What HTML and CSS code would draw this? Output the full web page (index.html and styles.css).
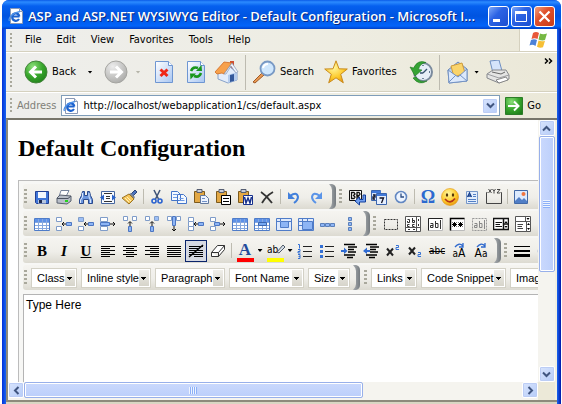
FILE: index.html
```html
<!DOCTYPE html>
<html lang="en">
<head>
<meta charset="utf-8">
<title>ASP and ASP.NET WYSIWYG Editor</title>
<link rel="stylesheet" href="styles.css">
</head>
<body>
<svg class="defs" aria-hidden="true">
  <defs>
    <linearGradient id="paper" x1="0" y1="0" x2="1" y2="1"><stop offset="0" stop-color="#fff"/><stop offset="1" stop-color="#a8c6f2"/></linearGradient>
    <radialGradient id="green" cx=".35" cy=".25" r=".9"><stop offset="0" stop-color="#8ade78"/><stop offset=".5" stop-color="#38a62c"/><stop offset="1" stop-color="#1c7a18"/></radialGradient>
    <radialGradient id="gray" cx=".35" cy=".25" r=".9"><stop offset="0" stop-color="#ececec"/><stop offset="1" stop-color="#a3a3a0"/></radialGradient>
    <radialGradient id="gold" cx=".4" cy=".3" r=".8"><stop offset="0" stop-color="#fff7a0"/><stop offset=".6" stop-color="#fdc826"/><stop offset="1" stop-color="#e08a10"/></radialGradient>
    <linearGradient id="clamp" x1="0" x2="1"><stop offset="0" stop-color="#a9adb0"/><stop offset="1" stop-color="#757b80"/></linearGradient>
    <symbol id="ie" viewBox="0 0 16 16"><path d="M2.500.5h9l3 3v12h-12z" fill="#fff" stroke="#8a99b5"/><path d="M11.500.5v3h3" fill="#dce6f5" stroke="#8a99b5"/><path d="M11.500 8.500H4.500M11 11c-2 3-7 2-6.800-2.200C4.300 4.500 10.500 4 11.300 8.500" fill="none" stroke="#1d63cf" stroke-width="2.200"/><path d="M1.500 13C-.5 10 5 4.500 12 3.500" fill="none" stroke="#4c91e8" stroke-width="1.300"/></symbol>
    <symbol id="clamp-shape" viewBox="0 0 7 25"><path d="M0 0h3q4 1 4 5v15q0 4-4 5H0q3-3 3-6V6q0-3-3-6z" fill="url(#clamp)"/></symbol>
    <symbol id="clip" viewBox="0 0 16 16"><path d="M1.500 2.500h10v11h-10z" fill="#e3a844" stroke="#7c5a1c"/><path d="M4 .5h5v3H4z" fill="#c9cdd8" stroke="#555e72"/></symbol>
    <symbol id="cells-left" viewBox="0 0 16 16"><path d="M.5 1.500h5v4h-5zM.5 10.500h5v4h-5z" fill="#fff" stroke="#7f9cc9"/><path d="M10.500 6.500h5v3h-5z" fill="#8db5f5" stroke="#4c76c2"/><path d="M6 8h4M8 6L6 8l2 2" stroke="#111" fill="none"/></symbol>
    <symbol id="cells-top" viewBox="0 0 16 16"><path d="M1.500.5h4v4h-4zM10.500.5h4v4h-4z" fill="#fff" stroke="#7f9cc9"/><path d="M6.500 10.500h3v5h-3z" fill="#8db5f5" stroke="#4c76c2"/><path d="M8 6v4M6 7.500L8 5.500l2 2" stroke="#111" fill="none"/></symbol>
    <symbol id="grid" viewBox="0 0 16 16"><path d="M.5 2.500h15v12H.5z" fill="#fff" stroke="#4f7cc8"/><path d="M1 3h14v3H1z" fill="#5d91e8"/><path d="M1 6.500h14M1 9.500h14M1 12.500h14M4.500 3v11M8.500 3v11M12.500 3v11" stroke="#86a8de"/></symbol>
  </defs>
</svg>
<div class="window">
  <header class="title">
    <svg class="i"><use href="#ie"/></svg>
    <span class="title-text">ASP and ASP.NET WYSIWYG Editor - Default Configuration - Microsoft I...</span>
    <div class="caption">
      <button aria-label="Minimize"><svg viewBox="0 0 19 19"><path d="M4 12h7v3H4z" fill="#fff"/></svg></button>
      <button aria-label="Maximize"><svg viewBox="0 0 19 19"><path d="M3.500 4.500h11v10h-11zM3.500 5.500h11" fill="none" stroke="#fff"/><path d="M3 4h12v3H3z" fill="#fff"/></svg></button>
      <button class="close" aria-label="Close"><svg viewBox="0 0 19 19"><path d="M4.500 4.500l10 10m0-10l-10 10" stroke="#fff" stroke-width="2.200"/></svg></button>
    </div>
  </header>
  <nav class="bar menu">
    <i class="dots"></i>
    <a href="#">File</a><a href="#">Edit</a><a href="#">View</a><a href="#">Favorites</a><a href="#">Tools</a><a href="#">Help</a>
    <span class="flag"><svg viewBox="0 0 20 18"><path d="M4 2q3-2 6 0L8.500 8q-3-1.500-6 0z" fill="#e8583a"/><path d="M11 2.500q3 1.500 7 0L16 9q-3 1-6.500-.5z" fill="#76b843"/><path d="M2 9q3-1.500 6 0l-1.500 6q-3-2-6-.5z" fill="#4d82d8"/><path d="M9.500 9.500q3 1.500 6.500.3l-2 6.500q-3 1.200-6-.6z" fill="#f6bf35"/></svg></span>
  </nav>
  <div class="bar tools">
    <i class="dots"></i>
    <button class="tool back"><svg class="big" viewBox="0 0 24 24"><circle cx="12" cy="12" r="11" fill="url(#green)" stroke="#43843b"/><path d="M18 12H7M12 6.500L6.500 12l5.500 5.500" fill="none" stroke="#fff" stroke-width="3"/></svg>Back</button>
    <button class="tool drop" aria-label="Back history"><i class="tri"></i></button>
    <button class="tool" aria-label="Forward"><svg class="big" viewBox="0 0 24 24"><circle cx="12" cy="12" r="11" fill="url(#gray)" stroke="#a4a4a0"/><path d="M6 12h11M12 6.500l5.500 5.500-5.500 5.500" fill="none" stroke="#fff" stroke-width="3"/></svg></button>
    <button class="tool drop next-drop" aria-label="Forward history"><i class="tri off"></i></button>
    <button class="tool page-tool" aria-label="Stop"><svg class="big" viewBox="0 0 24 24"><path d="M3.500 1.500h13l4 4v17h-17z" fill="url(#paper)" stroke="#6e96d2"/><path d="M16.500 1.500v4h4" fill="#fff" stroke="#6e96d2"/><path d="M8.500 9.500l7 6.500m0-6.500l-7 6.500" stroke="#f02818" stroke-width="3"/></svg></button>
    <button class="tool page-tool" aria-label="Refresh"><svg class="big" viewBox="0 0 24 24"><path d="M3.500 1.500h13l4 4v17h-17z" fill="url(#paper)" stroke="#6e96d2"/><path d="M16.500 1.500v4h4" fill="#fff" stroke="#6e96d2"/><path d="M7 11q2-5 7-3M17 13q-2 5-7 3" fill="none" stroke="#18961c" stroke-width="2.600"/><path d="M12 11l6 0-.5-6zM12 13.500H6l.5 6z" fill="#18961c"/></svg></button>
    <button class="tool home" aria-label="Home"><svg class="big" viewBox="0 0 24 24"><path d="M15 1h4v8h-4z" fill="#d05032"/><path d="M3 12l11-6 8 7v7l-9 3-10-4z" fill="#e3edfb" stroke="#88a1c9"/><path d="M13 15l9-3v8l-9 3z" fill="#b3cbed"/><path d="M15 15l4-1v7l-4 1z" fill="#33589a"/><path d="M0 12L9 2l8 1-8 11-2-1-5 1z" fill="#f7a14b" stroke="#cf6b23" stroke-width=".8"/><path d="M17 3l6 9-2 1-5-7-5 8-2 0z" fill="#f1f5fc" stroke="#8195b5" stroke-width=".7"/></svg></button>
    <i class="rule"></i>
    <button class="tool"><svg class="big" viewBox="0 0 24 24"><path d="M1 22l9-9 2 2-9 8z" fill="#e99a52" stroke="#a05a28"/><circle cx="15.500" cy="8.500" r="7" fill="#cfe7fd" stroke="#7899c4" stroke-width="1.800"/><path d="M11 8q1-4 5-4" fill="none" stroke="#fff" stroke-width="2"/></svg>Search</button>
    <button class="tool star"><svg class="big" viewBox="0 0 24 24"><path d="M12 .8l3 8 8.300.2-6.600 5.300 2.600 8.500-7.300-5-7.300 5 2.600-8.500L.7 9 9 8.800z" fill="url(#gold)" stroke="#c98b1c"/></svg>Favorites</button>
    <button class="tool history" aria-label="History"><svg class="big" viewBox="0 0 24 24"><circle cx="14" cy="12" r="9" fill="#e6eef8" stroke="#7a8a9d" stroke-width="2"/><path d="M14 13l4-4M14 13h-3M14 5v1M14 18v1M21 12h-1" stroke="#34506e" stroke-width="1.300"/><path d="M17 2.500Q9-1 4.500 8L1 7l5 9 7-6-3.500-.5Q11 3 17 2.500zM7 17q4 6 11 4-8 5-14-3z" fill="#35a334" stroke="#1d7720" stroke-width=".6"/></svg></button>
    <i class="rule"></i>
    <button class="tool" aria-label="Mail"><svg class="big" viewBox="0 0 24 24"><path d="M2 10L12 2l9 7v12l-18 2z" fill="#b9d0f1" stroke="#6785b5"/><path d="M5 6l11-3 3 10-11 4z" fill="#fad46b" stroke="#cf9c3a"/><path d="M2 10l10 7 9-8v12L3 23z" fill="#dce9fc" stroke="#7493c4"/><path d="M3 22l7-7m4 0l7 6" stroke="#7493c4"/></svg></button>
    <button class="tool drop mail-drop" aria-label="Mail options"><i class="tri"></i></button>
    <button class="tool" aria-label="Print"><svg class="big" viewBox="0 0 24 24"><path d="M4 1l9-1 3 11-9 2z" fill="#d5e4fb" stroke="#6f8fc2"/><path d="M1 14l6-4 13 0 3 5v4l-10 4-12-5z" fill="#e4e4e3" stroke="#85878c"/><path d="M1 14l12 4 10-3" fill="none" stroke="#9c9da0"/><path d="M6 12l9 2 4-2" stroke="#666" fill="none"/><path d="M10 20l10-3 2 3-9 3z" fill="#fff" stroke="#888"/></svg></button>
    <button class="tool more" aria-label="More"><svg viewBox="0 0 9 6"><path d="M1 .5L3.500 3 1 5.500M5 .5L7.500 3 5 5.500" fill="none" stroke="#000" stroke-width="1.500"/></svg></button>
  </div>
  <form class="bar address">
    <i class="dots"></i>
    <label for="url">Address</label>
    <div class="field">
      <svg class="i"><use href="#ie"/></svg>
      <input id="url" type="text" value="http://localhost/webapplication1/cs/default.aspx">
      <button type="button" class="xp" aria-label="Show addresses"><svg viewBox="0 0 9 9"><path d="M1 2.500l3.500 3.500L8 2.500" fill="none" stroke="#40557f" stroke-width="2"/></svg></button>
    </div>
    <button type="button" class="tool go"><svg viewBox="0 0 18 18"><path d="M.5.5h17v17H.5z" fill="url(#green)" stroke="#2c7c28"/><path d="M3 9h10M9 4.500L13.500 9 9 13.500" fill="none" stroke="#fff" stroke-width="2"/></svg>Go</button>
  </form>
  <main class="view">
    <section class="page">
      <h2>Default Configuration</h2>
      <div class="editor">
        <div class="row">
          <i class="dots"></i>
          <button aria-label="Save"><svg class="i" viewBox="0 0 16 16"><path d="M1.500 2.500h13v12h-12l-1-1z" fill="#3f75d8" stroke="#213f94"/><path d="M4 3h8v6H4z" fill="#f3f8ff"/><path d="M4 11h8v3.500H4z" fill="#b6c6e0"/><path d="M5 11h3v3H5z" fill="#202b50"/></svg></button>
          <button aria-label="Print"><svg class="i" viewBox="0 0 16 16"><path d="M5 1.500h8l-3 6H3z" fill="#fff" stroke="#75839b"/><path d="M1 9l3-3 11 1v5l-4 3-10-1z" fill="#b8bec8" stroke="#58606e"/><path d="M1 9.500h11l3-2.500" fill="none" stroke="#4b5361"/><path d="M9 11h3v2H9z" fill="#25d31d"/></svg></button>
          <button aria-label="Find"><svg class="i" viewBox="0 0 16 16"><path d="M4.500 2.500h2v4h3v-4h2l1 4 2 4v4h-4v-4h-5v4h-4v-4l2-4z" fill="#6b95dd" stroke="#2b4a8c"/><path d="M4.500 4v4l-2 3v3M11 4v4l1.500 3v3" stroke="#d8e6fc" fill="none"/><path d="M7 11h2v4H7z" fill="#f0efe9"/></svg></button>
          <button aria-label="Fit"><svg class="i" viewBox="0 0 16 16"><path d="M1.500 2.500h13v12h-13z" fill="#f8fbff" stroke="#45669f"/><path d="M4 4.500h8M4 12.500h8M6 7.500h4M6 9.500h4" stroke="#333"/><path d="M0 8.500l4-3v6zM16 8.500l-4-3v6z" fill="#2b64ca"/></svg></button>
          <button aria-label="Clean up"><svg class="i" viewBox="0 0 16 16"><path d="M9 5l4-4 2 2-4 4z" fill="#4d75bf" stroke="#2d4478"/><path d="M7 5l2-1 4 4-1 2z" fill="#7d8697"/><path d="M0 9l7-4 5 5-5 5z" fill="#f6c65c" stroke="#9b7322"/><path d="M3 9l4 4M5 8l4 4" stroke="#fff2b5"/></svg></button>
          <i class="rule"></i>
          <button aria-label="Cut"><svg class="i" viewBox="0 0 16 16"><path d="M5 1l4.500 9M11 1L6.500 10" stroke="#43577a" stroke-width="1.600"/><circle cx="5" cy="12" r="2" fill="none" stroke="#2a62cf" stroke-width="1.600"/><circle cx="11" cy="12" r="2" fill="none" stroke="#2a62cf" stroke-width="1.600"/></svg></button>
          <button aria-label="Copy"><svg class="i" viewBox="0 0 16 16"><path d="M.5 2.500h6l3 3v6h-9zM6.500 5.500h6l3 3v6h-9z" fill="#f4f9ff" stroke="#4475c8"/><path d="M2 5.500h4M2 8.500h4M8.500 9.500h4M8.500 11.500h5" stroke="#6d9ae4"/></svg></button>
          <button aria-label="Paste"><svg class="i" viewBox="0 0 16 16"><use href="#clip"/><path d="M7.500 6.500h5l3 3v5h-8z" fill="#edf4ff" stroke="#62789c"/><path d="M9 9.500h3M9 12.500h5" stroke="#7191c8"/></svg></button>
          <button aria-label="Paste text"><svg class="i" viewBox="0 0 16 16"><use href="#clip"/><path d="M6.500 6.500h9v9h-9z" fill="#fff" stroke="#000"/><path d="M8 9.500h6M8 12.500h6" stroke="#000"/></svg></button>
          <button aria-label="Paste from Word"><svg class="i" viewBox="0 0 16 16"><use href="#clip"/><path d="M6.500 6.500h9v9h-9z" fill="#fff" stroke="#152f8c"/><path d="M7.500 8l1.500 6 2-5 2 5 1.500-6" fill="none" stroke="#152f8c" stroke-width="1.500"/></svg></button>
          <button aria-label="Delete"><svg class="i" viewBox="0 0 16 16"><path d="M2 3q6 4 11 11M14 3Q7 7 3 14" fill="none" stroke="#333" stroke-width="1.800"/></svg></button>
          <i class="rule"></i>
          <button aria-label="Undo"><svg class="i" viewBox="0 0 16 16"><path d="M4 7q7-5 8 1 0 3-4 6" fill="none" stroke="#4280dc" stroke-width="2"/><path d="M2 3v7h7z" fill="#4280dc"/></svg></button>
          <button aria-label="Redo"><svg class="i" viewBox="0 0 16 16"><path d="M12 7Q5 2 4 8q0 3 4 6" fill="none" stroke="#5a94e8" stroke-width="2"/><path d="M14 3v7H7z" fill="#5a94e8"/></svg></button>
          <svg class="clamp"><use href="#clamp-shape"/></svg>
          <i class="dots"></i>
          <button aria-label="Line break"><svg class="i wide" viewBox="0 0 18 18"><path d="M1.500 2.500h12v10h-12z" fill="#fff" stroke="#111"/><path d="M3.500 4.500v6H6L7 9 5.500 7.500 7 6 6 4.500zM9 11V4.500h2l1 1.500-1 1.500H9l3 3.500" fill="none" stroke="#111" stroke-width="1.300"/><path d="M17.500 7v7h-6v3L7 13l4.500-4v2.500H15V7z" fill="#74a1f0" stroke="#123f9c"/></svg></button>
          <button aria-label="Date"><svg class="i" viewBox="0 0 16 16"><path d="M.5 1.500h9v10h-9z" fill="#d3e3fb" stroke="#3b65ad"/><path d="M1 2h9v2H1z" fill="#4179d9"/><path d="M5.500 4.500h10v11h-10z" fill="#e6effd" stroke="#3b65ad"/><path d="M6 5h9v2H6z" fill="#4179d9"/><path d="M8.500 9h4l-2 5M2 6h2v2H2v2h2" stroke="#112" fill="none" stroke-width="1.300"/></svg></button>
          <button aria-label="Time"><svg class="i" viewBox="0 0 16 16"><circle cx="8" cy="8" r="5.500" fill="#eef5ff" stroke="#6388c2" stroke-width="1.600"/><path d="M8 4.500V8h3" fill="none" stroke="#2a4b83" stroke-width="1.300"/></svg></button>
          <i class="rule"></i>
          <button class="glyph omega" aria-label="Symbol">Ω</button>
          <button aria-label="Emoticon"><svg class="i wide" viewBox="0 0 18 18"><circle cx="9" cy="9" r="8.500" fill="url(#gold)" stroke="#e29516" stroke-width=".6"/><ellipse cx="6" cy="7" rx="1.200" ry="1.800" fill="#543707"/><ellipse cx="12" cy="7" rx="1.200" ry="1.800" fill="#543707"/><path d="M4 11q5 6 10-.5" fill="none" stroke="#b2321a" stroke-width="1.700"/></svg></button>
          <button aria-label="Template"><svg class="i" viewBox="0 0 16 16"><path d="M2.500 2.500h11v12h-11z" fill="#e3eefc" stroke="#7797c8"/><path d="M3.500 8L5.500 4l2 4M4 7h3" fill="none" stroke="#153f8d" stroke-width="1.300"/><path d="M9 5.500h3M9 7.500h3M4 10.500h8M4 12.500h8" stroke="#527fc6"/></svg></button>
          <button aria-label="Group box"><svg class="i" viewBox="0 0 16 16"><path d="M1.500 3.500h-1v11h15v-11h-1" fill="none" stroke="#444"/><path d="M2.500 0l3 4M5.500 0l-3 4M6.500 0L8 2l1.500-2M8 2v2.500M11 .5h3L11 4h3" fill="none" stroke="#333" stroke-width=".9"/></svg></button>
          <i class="rule"></i>
          <button aria-label="Image"><svg class="i" viewBox="0 0 16 16"><path d="M1.500 1.500h13v13h-13z" fill="#dceafe" stroke="#4269a6"/><path d="M2 12l4-4 3 3 2-2 3 3v2H2z" fill="#507ec6"/><circle cx="10.500" cy="5" r="2" fill="#ef7540"/></svg></button>
        </div>
        <div class="row">
          <i class="dots"></i>
          <button aria-label="Insert table"><svg class="i" viewBox="0 0 16 16"><use href="#grid"/></svg></button>
          <button aria-label="Insert row"><svg class="i" viewBox="0 0 16 16"><use href="#cells-left"/></svg></button>
          <button aria-label="Insert row above"><svg class="i" viewBox="0 0 16 16"><use href="#cells-left"/><path d="M1 2h4v3H1z" fill="#9dbff6"/></svg></button>
          <button aria-label="Insert row below"><svg class="i" viewBox="0 0 16 16"><path d="M.5 1.500h7v4h-7zM.5 10.500h7v4h-7z" fill="#fff" stroke="#7f9cc9"/><path d="M.5 6.500h9v3h-9z" fill="#8db5f5" stroke="#4c76c2"/><path d="M10 8h5M13 6l2 2-2 2" stroke="#111" fill="none"/></svg></button>
          <button aria-label="Insert column"><svg class="i" viewBox="0 0 16 16"><use href="#cells-top"/></svg></button>
          <button aria-label="Insert column left"><svg class="i" viewBox="0 0 16 16"><use href="#cells-top"/><path d="M11 1h3v3h-3z" fill="#9dbff6"/></svg></button>
          <button aria-label="Insert column right"><svg class="i" viewBox="0 0 16 16"><path d="M1.500.5h4v4h-4zM10.500.5h4v4h-4z" fill="#fff" stroke="#7f9cc9"/><path d="M6.500.5h3v9h-3z" fill="#8db5f5" stroke="#4c76c2"/><path d="M8 10v5M6 13l2 2 2-2" stroke="#111" fill="none"/></svg></button>
          <button aria-label="Delete row"><svg class="i" viewBox="0 0 16 16"><use href="#cells-left"/><path d="M.5 5.500h5v5h-5z" fill="#fff" stroke="#7f9cc9"/></svg></button>
          <button aria-label="Split row"><svg class="i" viewBox="0 0 16 16"><path d="M.5 1.500h5v4h-5zM.5 10.500h5v4h-5z" fill="#fff" stroke="#7f9cc9"/><path d="M4.500 6.500h5v3h-5z" fill="#8db5f5" stroke="#4c76c2"/><path d="M10 8h5M13 6l2 2-2 2" stroke="#111" fill="none"/></svg></button>
          <button aria-label="Cells"><svg class="i" viewBox="0 0 16 16"><use href="#grid"/></svg></button>
          <button aria-label="Merge cells"><svg class="i" viewBox="0 0 16 16"><use href="#grid"/><path d="M4.500 6.500h8v3h-8z" fill="#78a9f1" stroke="#3c66b0"/></svg></button>
          <button aria-label="Cell properties"><svg class="i" viewBox="0 0 16 16"><path d="M.5 2.500h15v12H.5z" fill="#dfeafc" stroke="#4f7cc8"/><path d="M4.500 5.500h8v6h-8zM1 5.500h3M12 5.500h3M4.500 3v2" fill="#8db5f5" stroke="#4f7cc8"/></svg></button>
          <button aria-label="Table properties"><svg class="i" viewBox="0 0 16 16"><path d="M.5 2.500h15v12H.5z" fill="#dfeafc" stroke="#4f7cc8"/><path d="M4.500 5.500h10v8h-10zM1 5.500h3M1 9.500h3M4.500 3v3M9.500 3v2" fill="#8db5f5" stroke="#4f7cc8"/></svg></button>
          <button aria-label="Split horizontally"><svg class="i" viewBox="0 0 16 16"><path d="M.5 7.500h4v3h-4zM5.500 7.500h4v3h-4zM10.500 7.500h4v3h-4z" fill="#8db5f5" stroke="#5b80bb"/></svg></button>
          <button aria-label="Split vertically"><svg class="i" viewBox="0 0 16 16"><path d="M6.500 1.500h3v3h-3zM6.500 6.500h3v3h-3zM6.500 11.500h3v3h-3z" fill="#8db5f5" stroke="#5b80bb"/></svg></button>
          <svg class="clamp"><use href="#clamp-shape"/></svg>
          <i class="dots"></i>
          <button aria-label="Form"><svg class="i" viewBox="0 0 16 16"><path d="M1.500 3.500h13v10h-13z" fill="none" stroke="#333" stroke-dasharray="2 1"/></svg></button>
          <button aria-label="Text area"><svg class="i" viewBox="0 0 16 16"><path d="M.5.5h15v15H.5zM11.500 1v15M1 11.500h15" fill="#fff" stroke="#555"/><path d="M2.500 3.500h2v3h-2V5M7.500 2v4.500h2v-2h-2M4.500 8.500h-2v2h2M9.500 8.500h-2v2h2M13.500 3v2M13.500 8v2M3 13.500h2M8 13.500h2" fill="none" stroke="#333"/></svg></button>
          <button aria-label="Text box"><svg class="i" viewBox="0 0 16 16"><path d="M1.500 2.500h14v12h-14z" fill="#fff" stroke="#bbb"/><path d="M1.500 14.500v-12h14" fill="none" stroke="#222"/><path d="M3.500 7.500h2.500v4H3.500v-2H6M8.500 5v6.500H11v-4H8.500M13.500 4v9" fill="none" stroke="#333"/></svg></button>
          <button aria-label="Password"><svg class="i" viewBox="0 0 16 16"><path d="M1.500 2.500h14v12h-14z" fill="#fff" stroke="#bbb"/><path d="M1.500 14.500v-12h14" fill="none" stroke="#000" stroke-width="1.500"/><path d="M3 8.500h5M5.500 6v5M3.500 6.500l4 4m0-4l-4 4M9 8.500h5M11.500 6v5M9.500 6.500l4 4m0-4l-4 4" stroke="#000"/></svg></button>
          <button aria-label="Hidden field"><svg class="i" viewBox="0 0 16 16"><path d="M1.500 2.500h14v12h-14z" fill="none" stroke="#999" stroke-dasharray="2 1"/><path d="M3.500 7.500h2.500v4H3.500v-2H6M8.500 5v6.500H11v-4H8.500M13.500 4v9" fill="none" stroke="#888"/></svg></button>
          <button aria-label="List box"><svg class="i" viewBox="0 0 16 16"><path d="M.5 2.500h15v11H.5zM10.500 3v10M10.500 8h5" fill="#fff" stroke="#111" stroke-width="1.500"/><path d="M2.500 6.500H9M2.500 8.500H7M2.500 10.500H9" stroke="#111"/><path d="M11.500 7h3L13 5zM11.500 10h3L13 12z"/></svg></button>
          <button aria-label="Drop-down list"><svg class="i" viewBox="0 0 16 16"><path d="M.5.500h15v5H.5zM.5 5.500h11v10H.5zM11.500 5.500h4v10h-4zM10.500.5v5" fill="#fff" stroke="#555"/><path d="M2.500 8.500H8M2.500 10.500H7M2.500 12.500H8" stroke="#444"/><path d="M11.500 2h3L13 4zM12 9h3l-1.500-2zM12 12h3l-1.500 2z"/></svg></button>
          <button aria-label="Tick box"><svg class="i" viewBox="0 0 16 16"><path d="M5.500 4.500h8v8h-8z" fill="#fff" stroke="#777"/></svg></button>
        </div>
        <div class="row">
          <i class="dots"></i>
          <button class="glyph"><b>B</b></button>
          <button class="glyph"><em>I</em></button>
          <button class="glyph"><u>U</u></button>
          <button aria-label="Align left"><svg class="i" viewBox="0 0 16 16"><path d="M1 3.500h14M1 5.500h9M1 7.500h14M1 9.500h9M1 11.500h14M1 13.500h9" stroke="#000"/></svg></button>
          <button aria-label="Centre"><svg class="i" viewBox="0 0 16 16"><path d="M1 3.500h14M4 5.500h8M1 7.500h14M4 9.500h8M1 11.500h14M4 13.500h8" stroke="#000"/></svg></button>
          <button aria-label="Align right"><svg class="i" viewBox="0 0 16 16"><path d="M1 3.500h14M6 5.500h9M1 7.500h14M6 9.500h9M1 11.500h14M6 13.500h9" stroke="#000"/></svg></button>
          <button aria-label="Justify"><svg class="i" viewBox="0 0 16 16"><path d="M1 3.500h14M1 5.500h14M1 7.500h14M1 9.500h14M1 11.500h14M1 13.500h14" stroke="#000"/></svg></button>
          <button class="on" aria-label="No alignment"><svg class="i" viewBox="0 0 16 16"><path d="M1 3.500h14M1 5.500h9M1 7.500h14M1 9.500h14M1 11.500h14M6 13.500h9" stroke="#000"/><path d="M1 14L15 2" stroke="#000" stroke-width="1.500"/></svg></button>
          <button aria-label="Remove format"><svg class="i" viewBox="0 0 16 16"><path d="M1.500 9.500l6-7h7l-6 7h-7zM8.500 9.500v4l6-7v-4M1.500 9.500v4h7" fill="#fff" stroke="#333"/></svg></button>
          <i class="rule"></i>
          <button aria-label="Font colour" class="swatch red"><b>A</b></button>
          <button class="thin" aria-label="Pick font colour"><i class="tri"></i></button>
          <button aria-label="Highlight" class="swatch yellow"><span>ab</span><svg class="pen" viewBox="0 0 10 10"><path d="M1 8l6-7 2 2-6 6z" fill="#d6dfe8" stroke="#4d5866"/></svg></button>
          <button class="thin" aria-label="Pick highlight colour"><i class="tri"></i></button>
          <button aria-label="Numbered list"><svg class="i" viewBox="0 0 16 16"><path d="M6 3.500h9M6 8.500h9M6 13.500h9" stroke="#222"/><path d="M1 1.500h1.500v4M1 6.500h2v2H1v1.500h2.500M1 11.500h2v4H1M1.500 13.500H3" fill="none" stroke="#3470d4"/></svg></button>
          <button aria-label="Bulleted list"><svg class="i" viewBox="0 0 16 16"><path d="M6 3.500h9M6 8.500h9M6 13.500h9" stroke="#222"/><path d="M1 2h3v3H1zM1 7h3v3H1zM1 12h3v3H1z" fill="#3470d4"/></svg></button>
          <button aria-label="Indent"><svg class="i" viewBox="0 0 16 16"><path d="M3 1.500h11M7 4h9M7 6.500h6M7 9h8M3 12h11M6 14.500h6" stroke="#000" stroke-width="1.500"/><path d="M0 7h3V4.500L6.500 8 3 11V9H0z" fill="#2f6bd2"/></svg></button>
          <button aria-label="Outdent"><svg class="i" viewBox="0 0 16 16"><path d="M3 1.500h11M7 4h9M7 6.500h6M7 9h8M3 12h11M6 14.500h6" stroke="#000" stroke-width="1.500"/><path d="M7 7H4V4.500L0 8l4 3V9h3z" fill="#2f6bd2"/></svg></button>
          <button aria-label="Superscript"><svg class="i" viewBox="0 0 16 16"><path d="M2 5.500l6 7M8 5.500l-6 7" stroke="#222" stroke-width="2"/><path d="M11 2.500h2.500v2H11v2h3" fill="none" stroke="#3470d4"/></svg></button>
          <button aria-label="Subscript"><svg class="i" viewBox="0 0 16 16"><path d="M2 4.500l6 7M8 4.500l-6 7" stroke="#222" stroke-width="2"/><path d="M11 9.500h2.500v2H11v2h3" fill="none" stroke="#3470d4"/></svg></button>
          <button class="small-glyph"><s>abc</s></button>
          <button class="small-glyph case" aria-label="Upper case"><svg viewBox="0 0 16 5"><path d="M4 4q4-5 8-1M12 0v4H8" fill="none" stroke="#2e68cd" stroke-width="1.300"/></svg><span>a<big>A</big></span></button>
          <button class="small-glyph case" aria-label="Lower case"><svg viewBox="0 0 16 5"><path d="M4 4q4-5 8-1M12 0v4H8" fill="none" stroke="#2e68cd" stroke-width="1.300"/></svg><span><big>A</big>a</span></button>
          <svg class="clamp"><use href="#clamp-shape"/></svg>
          <i class="dots"></i>
          <button aria-label="Rule"><svg class="i" viewBox="0 0 16 16"><path d="M0 3.500h16" stroke="#000"/><path d="M0 8h16" stroke="#000" stroke-width="2"/><path d="M0 12.500h16" stroke="#000" stroke-width="3"/></svg></button>
          <button aria-label="Copyright"><svg class="i" viewBox="0 0 16 16"><circle cx="8" cy="8" r="5.500" fill="#fff" stroke="#6384bb" stroke-width="1.500"/><path d="M10 6q-4-2-4 2t4 2" fill="none" stroke="#335ca8"/></svg></button>
        </div>
        <div class="row picks">
          <i class="dots"></i>
          <select class="w-s" aria-label="Class"><option>Class</option></select>
          <select class="w-l" aria-label="Inline style"><option>Inline style</option></select>
          <select class="w-l" aria-label="Paragraph"><option>Paragraph</option></select>
          <select class="w-xl" aria-label="Font name"><option>Font Name</option></select>
          <select class="w-xs" aria-label="Size"><option>Size</option></select>
          <svg class="clamp"><use href="#clamp-shape"/></svg>
          <i class="dots"></i>
          <select class="w-s" aria-label="Links"><option>Links</option></select>
          <select class="w-xxl" aria-label="Code snippet"><option>Code Snippet</option></select>
          <select class="w-l" aria-label="Images"><option>Images</option></select>
        </div>
        <textarea aria-label="Content">Type Here</textarea>
      </div>
    </section>
    <div class="scroll vert">
      <button class="xp" aria-label="Scroll up"><svg viewBox="0 0 9 9"><path d="M1 6.500L4.500 3 8 6.500" fill="none" stroke="#40557f" stroke-width="2"/></svg></button>
      <div class="track"><div class="thumb"><i></i></div></div>
      <button class="xp" aria-label="Scroll down"><svg viewBox="0 0 9 9"><path d="M1 2.500L4.500 6 8 2.500" fill="none" stroke="#40557f" stroke-width="2"/></svg></button>
    </div>
    <div class="scroll horz">
      <button class="xp" aria-label="Scroll left"><svg viewBox="0 0 9 9"><path d="M6.500 1L3 4.500 6.500 8" fill="none" stroke="#40557f" stroke-width="2"/></svg></button>
      <div class="track"><div class="thumb"><i></i></div></div>
      <button class="xp" aria-label="Scroll right"><svg viewBox="0 0 9 9"><path d="M2.500 1L6 4.500 2.500 8" fill="none" stroke="#40557f" stroke-width="2"/></svg></button>
    </div>
    <div class="corner"></div>
  </main>
  <footer class="status"></footer>
</div>
</body>
</html>
```
FILE: styles.css
```css
* { box-sizing: border-box; }
body {
  margin: 0;
  background: #fff;
  font: 11px/14px "DejaVu Sans Condensed", "DejaVu Sans", sans-serif;
  color: #000;
}
button { margin: 0; padding: 0; border: 0; background: none; font: inherit; color: inherit; }
svg { display: block; flex: none; }
.defs { position: absolute; width: 0; height: 0; }
.i { width: 16px; height: 16px; }
.i.wide { width: 18px; height: 18px; }

.window {
  display: flex;
  flex-direction: column;
  height: 100vh;
  margin: 0 1px 0 2px;
  padding: 0 4px;
  background: linear-gradient(to right, #0030d8, #1a64f0 4px, #1a64f0 calc(100% - 4px), #0018a8);
  border-radius: 7px 7px 0 0;
  overflow: hidden;
}

/* title bar */
.title {
  display: flex;
  align-items: center;
  gap: 4px;
  flex: none;
  height: 29px;
  margin: 0 -4px;
  padding: 3px 6px 0 6px;
  background: linear-gradient(#0a5be8, #2b8bff 2px, #0560ef 6px, #0054e0 16px, #0264fa 26px, #0040c8);
  color: #fff;
}
.title-text {
  flex: 1;
  min-width: 0;
  white-space: nowrap;
  font: 600 13px/18px "Open Sans", "Noto Sans", sans-serif;
  text-shadow: 1px 1px 0 #0a2a80;
}
.caption { display: flex; gap: 2px; }
.caption button {
  width: 21px;
  height: 21px;
  border: 1px solid #fff;
  border-radius: 3px;
  background: linear-gradient(135deg, #7fa9f8, #2c63e4 40%, #1c4fd0);
}
.caption .close { background: linear-gradient(135deg, #f0a080, #e0512c 40%, #c83c18); }

/* browser bars */
.bar {
  display: flex;
  align-items: center;
  flex: none;
  padding-left: 4px;
  background: linear-gradient(to right, #eeeeec, #eeede2 60%, #ebe8d8);
}
.dots {
  flex: none;
  width: 3px;
  height: 15px;
  background: repeating-linear-gradient(#a9a89c 0 2px, transparent 2px 4px);
}
.bar .dots { width: 2px; }
.menu { height: 23px; border-bottom: 1px solid #d5d1bf; gap: 15px; }
.menu a { color: #000; text-decoration: none; }
.menu .dots { margin-right: -2px; }
.flag {
  display: grid;
  place-items: center;
  align-self: stretch;
  width: 38px;
  margin-left: auto;
  border-left: 1px solid #d5d1bf;
  background: #fff;
}
.flag svg { width: 20px; height: 18px; }
.tools { height: 40px; border-top: 1px solid #fff; border-bottom: 1px solid #d5d1bf; }
.tools .dots { height: 31px; margin-right: 12px; }
.tool { display: flex; align-items: center; gap: 4px; flex: none; }
.tool .big { width: 24px; height: 24px; }
.drop { width: 28px; justify-content: center; }
.tools .next-drop { width: 20px; }
.tools .mail-drop { width: 14px; margin-right: 2px; }
.tri { width: 5px; height: 3px; background: #000; clip-path: polygon(0 0, 100% 0, 50% 100%); }
.tri.off { background: #b5b4a8; }
.page-tool { width: 32px; justify-content: center; }
.home { margin-left: 3px; }
.rule { flex: none; width: 1px; background: #bdbbb0; }
.tools .rule { height: 35px; margin: 0 6px; }
.star { margin-left: 10px; }
.history { margin-left: 12px; }
.more { align-self: flex-start; margin: 5px 4px 0 auto; }
.more svg { width: 9px; height: 6px; }

.address { height: 26px; gap: 5px; padding-right: 16px; border-top: 1px solid #fff; }
.address label { color: #807f78; }
.field {
  display: flex;
  align-items: center;
  flex: 1;
  min-width: 0;
  height: 21px;
  padding: 0 1px 0 1px;
  border: 1px solid #7f9db9;
  background: #fff;
}
.field input {
  flex: 1;
  min-width: 0;
  padding: 0 0 0 4px;
  border: 0;
  background: none;
  font: inherit;
  color: inherit;
}
.go svg { width: 18px; height: 18px; }
.xp {
  display: grid;
  place-items: center;
  flex: none;
  width: 16px;
  height: 16px;
  border: 1px solid #fff;
  border-radius: 2px;
  background: linear-gradient(135deg, #d8e4fd, #b6ccf8);
  box-shadow: inset 0 0 0 1px #bccdf5;
}
.xp svg { width: 9px; height: 9px; }

/* document area */
.view {
  display: grid;
  grid-template: minmax(0, 1fr) 18px / minmax(0, 1fr) 17px;
  flex: 1;
  min-height: 0;
  padding-right: 2px;
  border-top: 2px solid #77756a;
  border-left: 2px solid #8d8a7c;
  background: #f1efe2;
}
.page { display: flex; flex-direction: column; overflow: hidden; padding: 15px 0 0 10px; background: #fff; }
h2 { margin: 0 0 18px; font: bold 24px/27px "Liberation Serif", serif; }
.editor {
  display: flex;
  flex-direction: column;
  flex: 1;
  gap: 2px;
  min-height: 0;
  min-width: 640px;
  padding: 3px 0 0 4px;
  border: 1px solid #bcbcbc;
  border-bottom: 0;
  background: #f7f7f5;
}
.row {
  display: flex;
  align-items: center;
  flex: none;
  height: 25px;
  padding-left: 1px;
  border-radius: 3px 0 0 3px;
  background: linear-gradient(#f5f4f0, #efeee9 55%, #dcdad1);
}
.row .dots { margin-right: 4px; }
.row button { display: flex; align-items: center; justify-content: center; flex: none; width: 22px; height: 22px; }
.row .rule { height: 15px; margin: 0 2px; }
.row .on { border: 1px solid #0a246a; background: #d6d9e2; }
.row .thin { width: 8px; }
.clamp { width: 7px; height: 25px; margin: 0 3px 0 2px; }
.glyph { font: 15px/18px "Liberation Serif", serif; }
.row .glyph { font-weight: bold; }
.row .omega { font-size: 18px; color: #2c69cf; }
.row .small-glyph { font: 10px/10px "DejaVu Sans Condensed", sans-serif; }
.row .case { flex-direction: column; }
.case svg { width: 16px; height: 5px; }
.case big { font-size: 12px; }
.row .swatch { position: relative; flex-direction: column; justify-content: flex-end; }
.swatch::after { content: ""; width: 17px; height: 4px; background: #f00; }
.swatch b { font: bold 17px/16px "Liberation Serif", serif; color: #234a9c; }
.swatch span { align-self: flex-start; padding-left: 3px; font: 10px/16px "DejaVu Sans Condensed", sans-serif; }
.row .yellow::after { background: #ff0; }
.pen { position: absolute; right: 0; top: 4px; width: 10px; height: 10px; }

.picks { gap: 4px; }
.picks .dots { margin-right: 0; }
.picks .clamp { margin: 0 0 0 -1px; }
.picks select {
  appearance: none;
  flex: none;
  height: 20px;
  padding: 0 0 0 5px;
  border: 1px solid #d3d1c6;
  border-radius: 0;
  background:
    linear-gradient(#000, #000) right 4px top 8px / 5px 1px no-repeat,
    linear-gradient(#000, #000) right 5px top 9px / 3px 1px no-repeat,
    linear-gradient(#000, #000) right 6px top 10px / 1px 1px no-repeat,
    linear-gradient(#efeee9, #d6d4ca) right 1px top 1px / 10px 16px no-repeat,
    #fff;
  font: 11px/14px "Liberation Sans", sans-serif;
  color: #000;
}
.w-xs { width: 42px; }
.w-s { width: 46px; }
.w-l { width: 70px; }
.w-xl { width: 75px; }
.w-xxl { width: 85px; }
.editor textarea {
  flex: 1;
  min-height: 0;
  margin: 2px 0 0;
  padding: 2px;
  border: 1px solid #b4b4b4;
  border-bottom: 0;
  resize: none;
  overflow: hidden;
  font: 12px/16px "Liberation Sans", sans-serif;
  color: #000;
}

/* scroll bars */
.scroll { display: flex; min-width: 0; min-height: 0; background: #f5f4ef; }
.vert { flex-direction: column; align-items: center; }
.track { display: flex; flex: 1; min-width: 0; min-height: 0; }
.vert .track { flex-direction: column; }
.thumb {
  display: grid;
  place-items: center;
  border: 1px solid #98b0ea;
  border-radius: 2px;
  box-shadow: inset 0 0 0 1px #fff;
}
.vert .thumb { width: 16px; height: 59%; background: linear-gradient(to right, #cad9fd, #bccffb); }
.horz .thumb { width: 68%; height: 16px; background: linear-gradient(#cad9fd, #bccffb); }
.vert .thumb i { width: 7px; height: 8px; background: repeating-linear-gradient(#eef4fe 0 1px, #8cb0f8 1px 2px); }
.horz .thumb i { width: 8px; height: 7px; background: repeating-linear-gradient(to right, #eef4fe 0 1px, #8cb0f8 1px 2px); }
.corner { background: #ece9d8; }
.status { flex: none; height: 4px; border-top: 2px solid #8d8a7c; background: #d9d6c3; }
```
